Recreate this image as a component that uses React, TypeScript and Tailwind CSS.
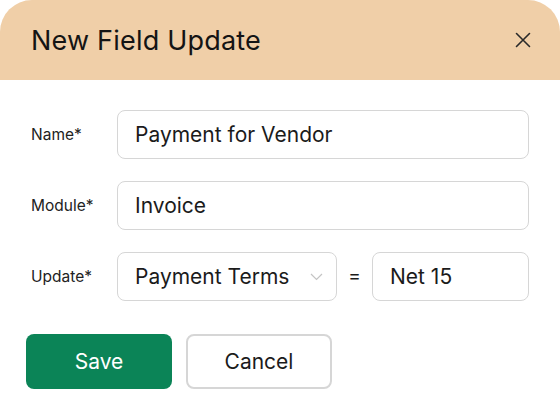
import React from "react";

export default function App() {
  return (
    <div className="w-[560px] h-[416px] bg-white font-['Inter',sans-serif] text-[#1b1b1b] overflow-hidden">
      <div className="h-[80px] bg-[#f0cfa8] rounded-t-[32px] flex items-center justify-between pl-[31px] pr-[30px]">
        <h1 className="text-[27px] font-normal tracking-[0.2px] leading-none text-[#141414]">New Field Update</h1>
        <svg width="16" height="16" viewBox="0 0 16 16" className="mr-[-1px]">
          <path d="M1.5 1.5 L14.5 14.5 M14.5 1.5 L1.5 14.5" stroke="#2a2a2a" strokeWidth="1.6" strokeLinecap="round" />
        </svg>
      </div>
      <div className="pl-[31px] pr-[31px] pt-[30px] flex flex-col gap-[22px]">
        <div className="flex items-center">
          <span className="w-[86px] text-[15.5px] text-[#222]">Name*</span>
          <div className="flex-1 h-[49px] border border-[#d6d6d6] rounded-[8px] flex items-center px-[17px] text-[21px]">
            Payment for Vendor
          </div>
        </div>
        <div className="flex items-center">
          <span className="w-[86px] text-[15.5px] text-[#222]">Module*</span>
          <div className="flex-1 h-[49px] border border-[#d6d6d6] rounded-[8px] flex items-center px-[17px] text-[21px]">
            Invoice
          </div>
        </div>
        <div className="flex items-center">
          <span className="w-[86px] text-[15.5px] text-[#222]">Update*</span>
          <div className="w-[220px] h-[49px] border border-[#d6d6d6] rounded-[8px] flex items-center justify-between pl-[17px] pr-[13px] text-[21px]">
            <span>Payment Terms</span>
            <svg width="13" height="8" viewBox="0 0 13 8">
              <path d="M1 1 L6.5 6.5 L12 1" stroke="#c4c4c4" strokeWidth="1.2" fill="none" />
            </svg>
          </div>
          <span className="w-[35px] text-center text-[19px]">=</span>
          <div className="flex-1 h-[49px] border border-[#d6d6d6] rounded-[8px] flex items-center px-[17px] text-[21px]">
            Net 15
          </div>
        </div>
      </div>
      <div className="pl-[26px] pt-[33px] flex gap-[14px]">
        <button className="w-[146px] h-[55px] rounded-[8px] bg-[#0b8457] text-white text-[21px]">Save</button>
        <button className="w-[146px] h-[55px] rounded-[8px] border-2 border-[#d6d6d6] bg-white text-[21px] text-[#1b1b1b]">Cancel</button>
      </div>
    </div>
  );
}
